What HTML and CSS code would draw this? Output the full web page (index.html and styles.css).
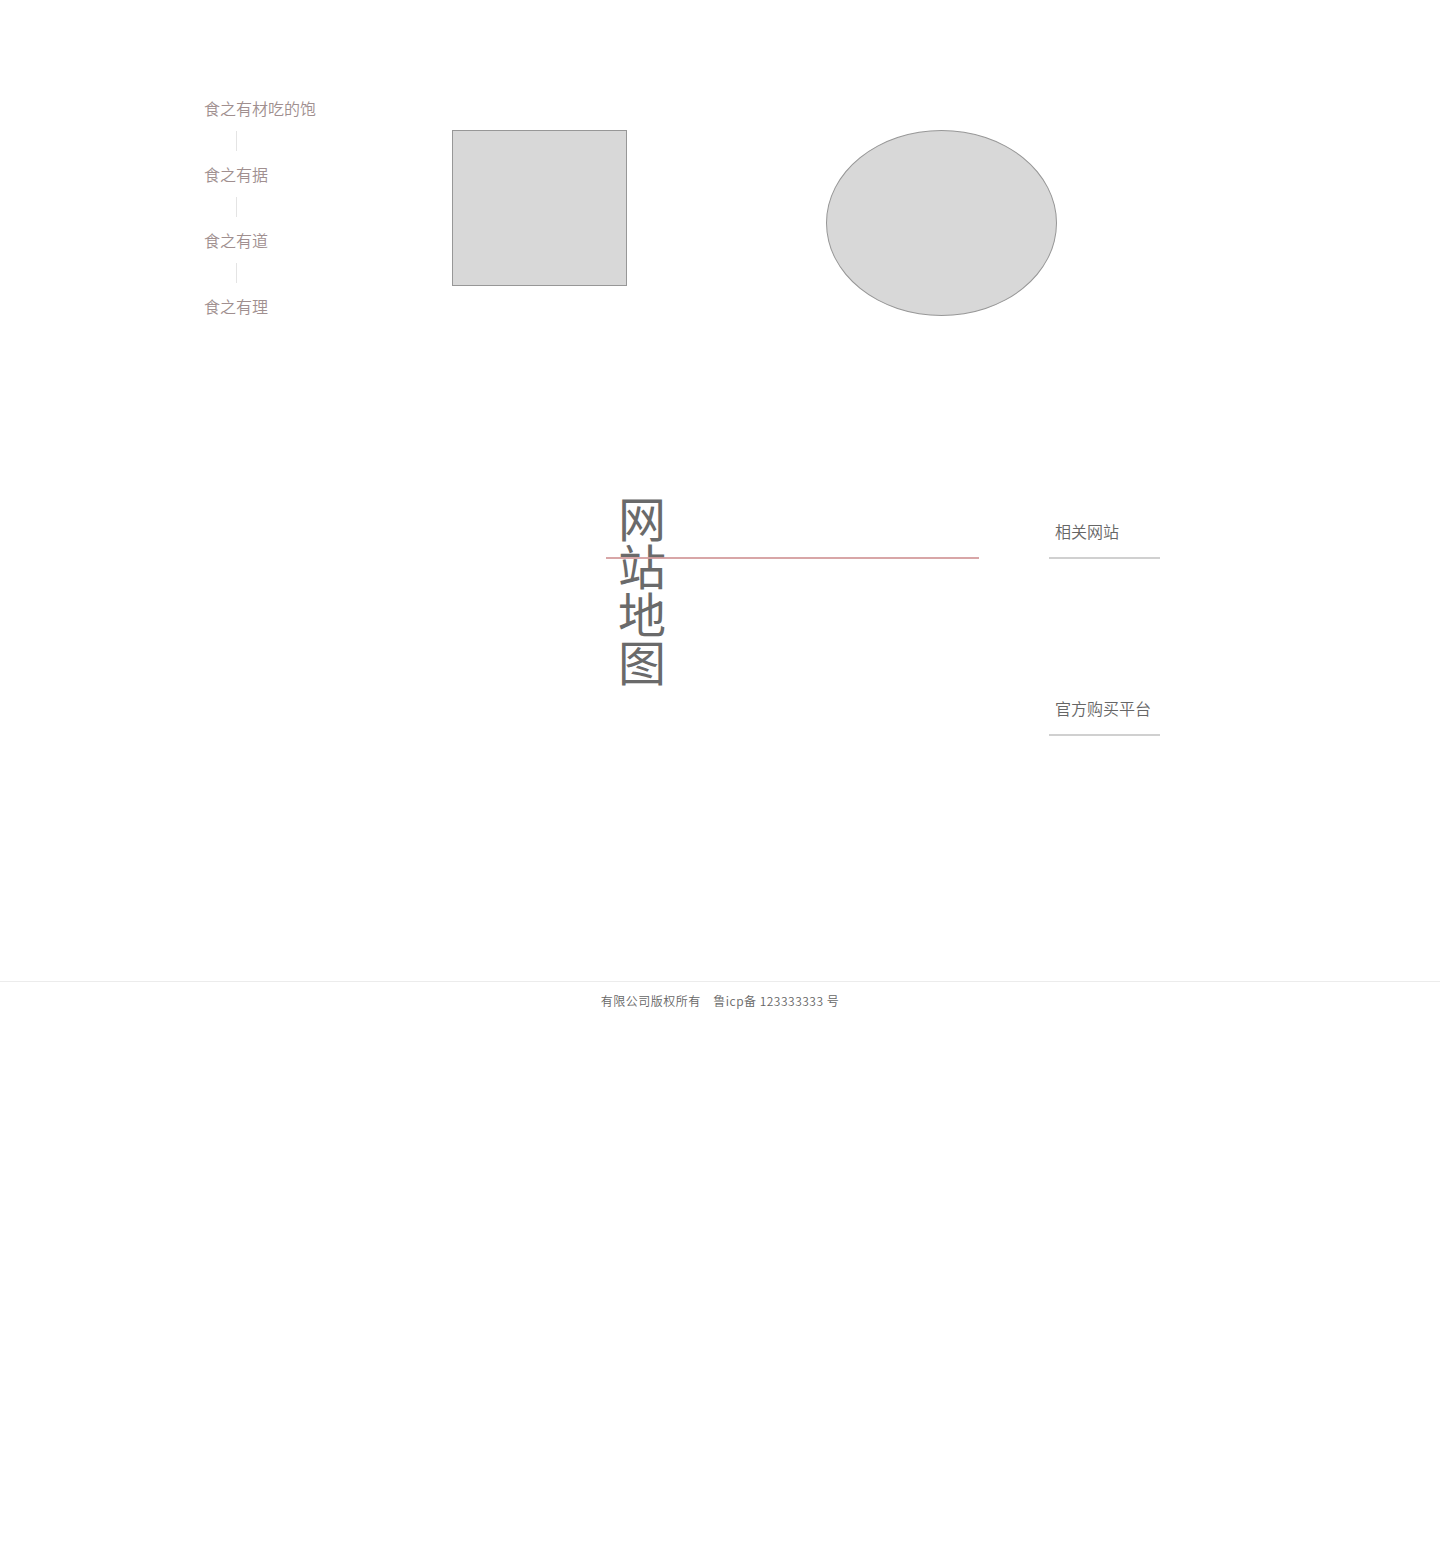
FILE: index.html
```html
<!DOCTYPE html>
<html lang="zh-CN">
<head>
    <meta charset="UTF-8">
    <meta name="viewport" content="width=device-width, initial-scale=1.0">
    <title>网站地图</title>
    <link rel="stylesheet" href="styles.css">
</head>
<body>
    <div class="page">
        <section class="top">
            <ul class="side-nav">
                <li class="side-item">食之有材吃的饱</li>
                <li class="side-sep"></li>
                <li class="side-item">食之有据</li>
                <li class="side-sep"></li>
                <li class="side-item">食之有道</li>
                <li class="side-sep"></li>
                <li class="side-item">食之有理</li>
            </ul>
            <div class="shape-rect"></div>
            <div class="shape-ellipse"></div>
        </section>

        <section class="sitemap">
            <div class="sitemap-title">
                <h2>网站地图</h2>
            </div>
            <div class="sitemap-links">
                <a class="sitemap-link" href="#">相关网站</a>
                <a class="sitemap-link" href="#">官方购买平台</a>
            </div>
        </section>
    </div>

    <footer class="footer">
        <p>有限公司版权所有　鲁icp备 123333333 号</p>
    </footer>
</body>
</html>
```

FILE: styles.css
```css
:root {
    --text-color: #666666;
    --nav-color: #a08f8f;
    --shape-fill: #d8d8d8;
    --shape-border: #979797;
    --accent-line: #d49c9d;
    --link-line: #d0d0d0;
}

*, *::before, *::after {
    box-sizing: border-box;
}

body {
    margin: 0;
    font-family: "Noto Sans CJK SC", "Noto Sans", sans-serif;
    font-weight: 350;
    color: var(--text-color);
    background: #ffffff;
}

.page {
    padding-top: 97px;
}

/* ----- Top section ----- */
.top {
    display: flex;
    align-items: flex-start;
    padding-left: 204px;
}

.side-nav {
    list-style: none;
    margin: 0;
    padding: 0;
    width: 248px;
}

.side-item {
    font-size: 16px;
    line-height: 22px;
    color: var(--nav-color);
}

.side-sep {
    width: 1px;
    height: 20px;
    margin: 12px 0 12px 32px;
    background: #e4e4e4;
}

.shape-rect {
    width: 175px;
    height: 156px;
    margin-top: 33px;
    background: var(--shape-fill);
    border: 1px solid var(--shape-border);
}

.shape-ellipse {
    width: 231px;
    height: 186px;
    margin-top: 33px;
    margin-left: 199px;
    background: var(--shape-fill);
    border: 1px solid var(--shape-border);
    border-radius: 50%;
}

/* ----- Sitemap ----- */
.sitemap {
    display: flex;
    align-items: flex-start;
    margin-top: 175px;
    padding-left: 606px;
}

.sitemap-title {
    position: relative;
    width: 373px;
    padding-left: 12px;
}

.sitemap-title h2 {
    margin: 0;
    width: 48px;
    font-size: 48px;
    line-height: 48px;
    font-weight: 400;
    color: #6a6a6a;
}

.sitemap-title::after {
    content: "";
    position: absolute;
    left: 0;
    top: 65px;
    width: 373px;
    height: 2px;
    background: var(--accent-line);
    opacity: 0.9;
}

.sitemap-links {
    display: flex;
    flex-direction: column;
    gap: 138px;
    width: 111px;
    margin-top: 28px;
    margin-left: 70px;
}

.sitemap-link {
    display: block;
    padding: 0 0 15px 6px;
    font-size: 16px;
    line-height: 22px;
    color: var(--text-color);
    text-decoration: none;
    border-bottom: 2px solid var(--link-line);
}

/* ----- Footer ----- */
.footer {
    margin-top: 245px;
    border-top: 1px solid #ececec;
    text-align: center;
}

.footer p {
    margin: 0;
    padding-top: 10px;
    font-size: 12px;
    line-height: 18px;
    letter-spacing: 0.5px;
    color: var(--text-color);
}
```
